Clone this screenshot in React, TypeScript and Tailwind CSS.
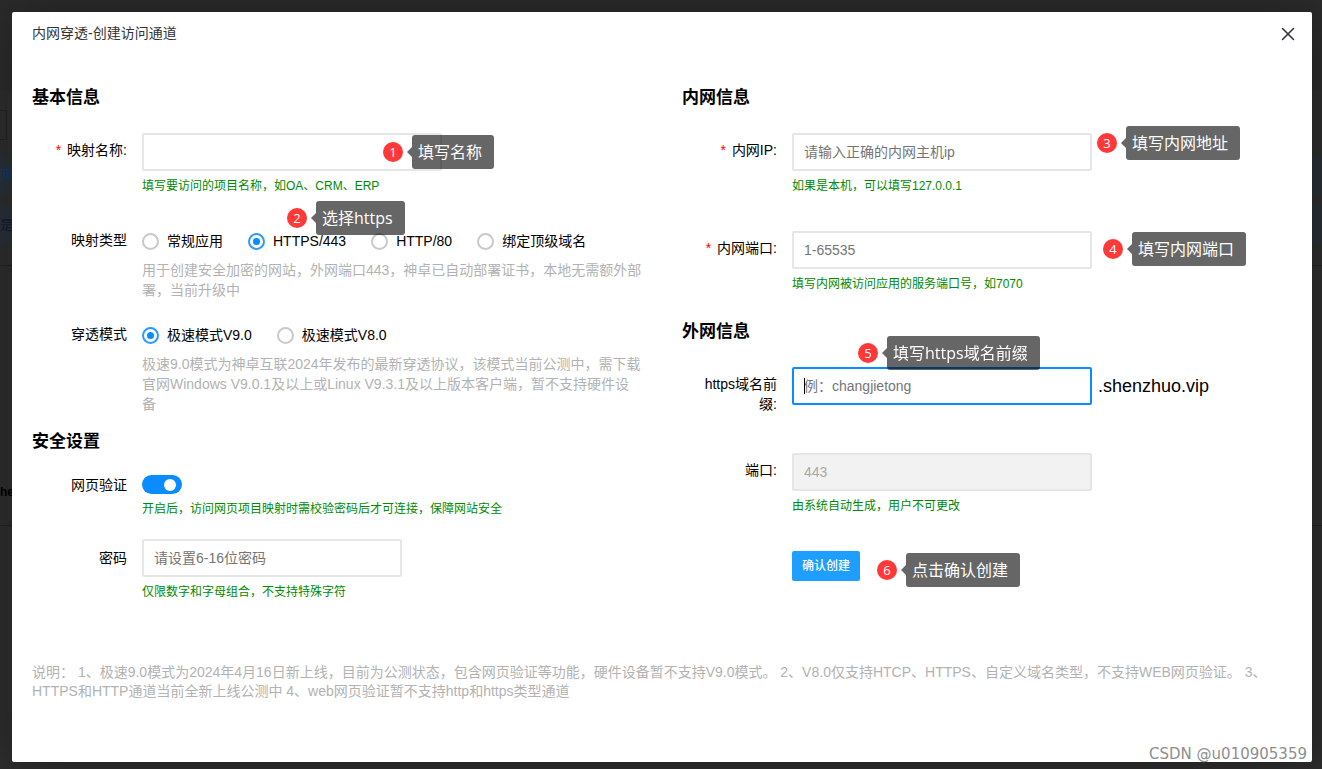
import { useState } from "react";
import type { ReactNode } from "react";
import { X } from "lucide-react";

const MAP_TYPES = ["常规应用", "HTTPS/443", "HTTP/80", "绑定顶级域名"];
const MODES = ["极速模式V9.0", "极速模式V8.0"];

const INPUT =
  "h-[38px] max-w-full rounded-xs border-2 border-[#e6e6e6] bg-white px-[10px] text-[14px] text-black outline-none placeholder:text-[#757575] focus:border-[#0a8cff] disabled:bg-[#f2f2f2] disabled:text-[#a8a8a8]";

function Callout({ n, text, place }: { n: number; text: string; place: string }) {
  return (
    <div
      className={`absolute z-10 flex items-center whitespace-nowrap font-['Open_Sans','Noto_Sans_CJK_SC',sans-serif] text-white ${place}`}
    >
      <span className="flex size-5 items-center justify-center rounded-full bg-[#ff3838] text-[13px] leading-5">
        {n}
      </span>
      <span className="ml-1 border-y-[5px] border-r-[5px] border-y-transparent border-r-black/60" />
      <span className="h-[34px] rounded-[3px] bg-black/60 pl-[6px] pr-3 text-[16px] leading-[34px]">
        {text}
      </span>
    </div>
  );
}

type RowProps = {
  label: string;
  htmlFor?: string;
  required?: boolean;
  labelPad?: string;
  className?: string;
  children: ReactNode;
};

function Row({ label, htmlFor, required, labelPad = "pt-[7px]", className = "", children }: RowProps) {
  return (
    <div className={`flex gap-[15px] ${className}`}>
      <label
        htmlFor={htmlFor}
        className={`w-[95px] shrink-0 pl-[15px] text-right text-[14px] leading-5 ${labelPad}`}
      >
        {required && <span className="mr-[2px] text-[#ff0000]">* </span>}
        {label}
      </label>
      <div className="relative min-w-0 flex-1">{children}</div>
    </div>
  );
}

function Tip({ children }: { children: ReactNode }) {
  return <p className="mt-[5px] text-[12px] leading-5 text-[#008a00]">{children}</p>;
}

function Title({ children, className = "" }: { children: ReactNode; className?: string }) {
  return <h2 className={`text-[17px] font-bold leading-6 ${className}`}>{children}</h2>;
}

type RadiosProps = {
  name: string;
  options: string[];
  value: string;
  onChange: (v: string) => void;
};

function Radios({ name, options, value, onChange }: RadiosProps) {
  return (
    <div className="flex flex-wrap gap-x-[25px] pt-px">
      {options.map((item) => (
        <label key={item} className="flex h-5 items-center gap-2 text-[14px]">
          <input
            type="radio"
            name={name}
            checked={value === item}
            onChange={() => onChange(item)}
            className="grid size-[17px] appearance-none place-items-center rounded-full border-2 border-[#c9c9c9] before:size-[7px] before:rounded-full checked:border-[#2b9bff] checked:before:bg-[#0a8cff]"
          />
          {item}
        </label>
      ))}
    </div>
  );
}

// the dimmed page that shows round the edges of the dialog
function Backdrop() {
  return (
    <div className="absolute inset-0 overflow-hidden bg-[#2d2d2d] text-[13px]" aria-hidden="true">
      <div className="h-[90px] bg-[#2b2b2b]" />
      <div className="mt-5 h-[30px] w-[7px] border border-l-0 border-[#222]" />
      <div className="mt-[15px] h-10 bg-[#292f37] leading-10 text-[#0a3a70]">网</div>
      <div className="mt-[10px] h-10 bg-[#292f37] leading-10 text-[#101c33]">是您</div>
      <div className="mt-5 border-t border-[#222]" />
      <div className="mt-[216px] h-[44px] border-b border-[#222] text-[12px] font-bold leading-5 text-black">
        he
      </div>
    </div>
  );
}

export default function App() {
  const [mapType, setMapType] = useState("HTTPS/443");
  const [mode, setMode] = useState("极速模式V9.0");
  const [verify, setVerify] = useState(true);

  return (
    <div className="relative min-h-screen pb-[7px] pl-3 pr-[10px] pt-3 font-['Liberation_Sans','Noto_Sans_CJK_SC',sans-serif] text-black">
      <Backdrop />
      <div
        role="dialog"
        aria-labelledby="dialog-title"
        className="relative rounded-xs bg-white shadow-[1px_1px_50px_rgba(0,0,0,0.3)]"
      >
        <header className="flex h-[42px] items-center justify-between pl-5 pr-[13px]">
          <h1 id="dialog-title" className="text-[14px] text-[#333]">
            内网穿透-创建访问通道
          </h1>
          <button type="button" aria-label="关闭" className="pt-px text-[#2e2d3c]">
            <X size={22} strokeWidth={1.6} />
          </button>
        </header>

        <form onSubmit={(e) => e.preventDefault()}>
          <div className="grid grid-cols-2 pt-8">
            <div className="px-5">
              <Title>基本信息</Title>
              <Row label="映射名称:" htmlFor="name" required className="mt-[23px]">
                <input id="name" type="text" className={`${INPUT} w-[300px]`} />
                <Tip>填写要访问的项目名称，如OA、CRM、ERP</Tip>
                <Callout n={1} text="填写名称" place="left-[241px] top-[2px]" />
              </Row>
              <Row label="映射类型" labelPad="pt-0" className="mt-[34px]">
                <Radios name="type" options={MAP_TYPES} value={mapType} onChange={setMapType} />
                <p className="mt-[9px] text-[14px] leading-5 text-[#b2b2b2]">
                  用于创建安全加密的网站，外网端口443，神卓已自动部署证书，本地无需额外部署，当前升级中
                </p>
                <Callout n={2} text="选择https" place="left-[145px] -top-[29px]" />
              </Row>
              <Row label="穿透模式" labelPad="pt-0" className="mt-6">
                <Radios name="mode" options={MODES} value={mode} onChange={setMode} />
                <p className="mt-[9px] text-[14px] leading-5 text-[#b2b2b2]">
                  极速9.0模式为神卓互联2024年发布的最新穿透协议，该模式当前公测中，需下载官网Windows
                  V9.0.1及以上或Linux V9.3.1及以上版本客户端，暂不支持硬件设备
                </p>
              </Row>

              <Title className="mt-4">安全设置</Title>
              <Row label="网页验证" htmlFor="verify" labelPad="pt-0" className="mt-[21px]">
                <input
                  id="verify"
                  type="checkbox"
                  role="switch"
                  checked={verify}
                  onChange={(e) => setVerify(e.target.checked)}
                  className="flex h-[19px] w-10 appearance-none items-center rounded-full bg-[#c9c9c9] px-[6px] before:size-3 before:rounded-full before:bg-white checked:justify-end checked:bg-[#0a8cff]"
                />
                <Tip>开启后，访问网页项目映射时需校验密码后才可连接，保障网站安全</Tip>
              </Row>
              <Row label="密码" htmlFor="pwd" labelPad="pt-[9px]" className="mt-5">
                <input
                  id="pwd"
                  type="password"
                  placeholder="请设置6-16位密码"
                  className={`${INPUT} w-[260px]`}
                />
                <Tip>仅限数字和字母组合，不支持特殊字符</Tip>
              </Row>
            </div>

            <div className="px-5">
              <Title>内网信息</Title>
              <Row label="内网IP:" htmlFor="ip" required className="mt-[23px]">
                <input
                  id="ip"
                  type="text"
                  placeholder="请输入正确的内网主机ip"
                  className={`${INPUT} w-[300px]`}
                />
                <Tip>如果是本机，可以填写127.0.0.1</Tip>
                <Callout n={3} text="填写内网地址" place="left-[305px] -top-[7px]" />
              </Row>
              <Row label="内网端口:" htmlFor="port" required className="mt-[35px]">
                <input id="port" type="text" placeholder="1-65535" className={`${INPUT} w-[300px]`} />
                <Tip>填写内网被访问应用的服务端口号，如7070</Tip>
                <Callout n={4} text="填写内网端口" place="left-[311px] top-px" />
              </Row>

              <Title className="mt-[26px]">外网信息</Title>
              <Row label="https域名前缀:" htmlFor="domain" className="mt-[23px]">
                <div className="flex items-center gap-[6px]">
                  <input
                    id="domain"
                    type="text"
                    autoFocus
                    placeholder="例：changjietong"
                    className={`${INPUT} peer w-[300px] caret-transparent`}
                  />
                  <span className="absolute left-3 top-[11px] hidden h-4 w-px bg-black peer-focus:peer-placeholder-shown:block" />
                  <span className="text-[18px] leading-6">.shenzhuo.vip</span>
                </div>
                <Callout n={5} text="填写https域名前缀" place="left-[66px] -top-[31px]" />
              </Row>
              <Row label="端口:" htmlFor="outport" className="mt-[39px]">
                <input
                  id="outport"
                  type="text"
                  value="443"
                  disabled
                  readOnly
                  className={`${INPUT} w-[300px]`}
                />
                <Tip>由系统自动生成，用户不可更改</Tip>
              </Row>
              <div className="relative ml-[110px] mt-[35px]">
                <button
                  type="submit"
                  className="block h-[30px] rounded-xs bg-[#1e9fff] px-[10px] text-[12px] font-medium text-white"
                >
                  确认创建
                </button>
                <Callout n={6} text="点击确认创建" place="left-[85px] top-[2px]" />
              </div>
            </div>
          </div>
        </form>

        <p className="px-5 pb-[61px] pt-[61px] text-[14px] leading-[19px] text-[#b2b2b2]">
          说明： 1、极速9.0模式为2024年4月16日新上线，目前为公测状态，包含网页验证等功能，硬件设备暂不支持V9.0模式。
          2、V8.0仅支持HTCP、HTTPS、自定义域名类型，不支持WEB网页验证。
          3、HTTPS和HTTP通道当前全新上线公测中 4、web网页验证暂不支持http和https类型通道
        </p>
      </div>
      <span className="absolute bottom-[5px] right-[15px] font-['DejaVu_Sans',sans-serif] text-[15px] leading-5 text-[#8e8e8e]">
        CSDN @u010905359
      </span>
    </div>
  );
}
